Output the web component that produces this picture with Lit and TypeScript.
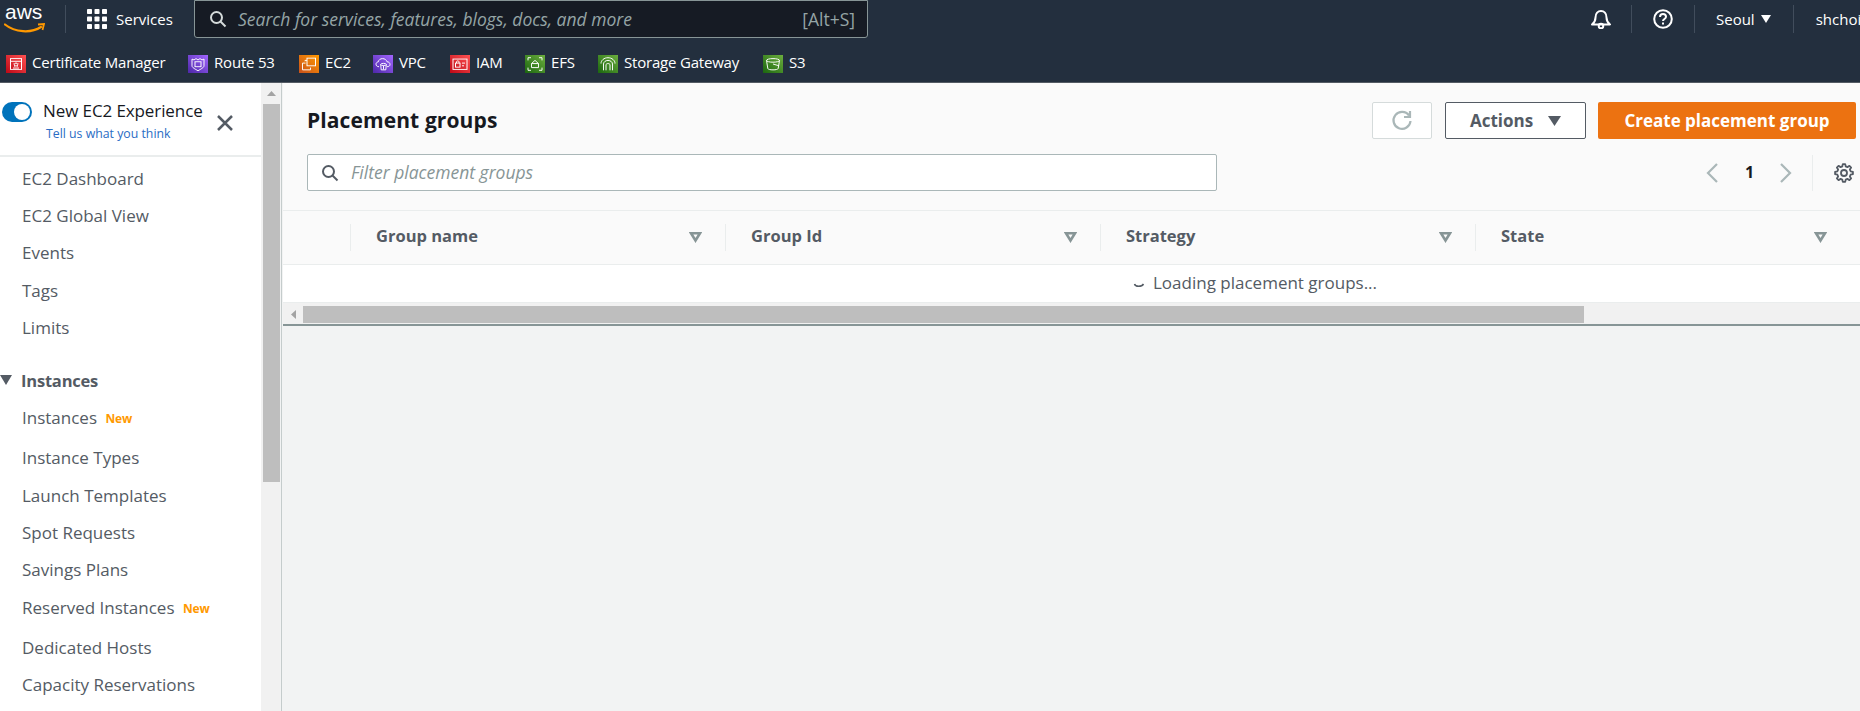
import { LitElement, html, css, svg } from "lit";
import { customElement } from "lit/decorators.js";

type Svc = { name: string; c1: string; c2: string; w: number; icon: any };
const s = svg;
const services: Svc[] = [
  { name: "Certificate Manager", c1: "#bd0816", c2: "#ff5252", w: 134, icon: s`<rect x="4.500" y="4" width="11" height="12"/><path d="M4.500 7h11M10 8.500l.8 1.300 1.500.2-1 1.100.2 1.500-1.500-.7-1.500.7.2-1.500-1-1.100 1.500-.2zM7 14.500h6"/>` },
  { name: "Route 53", c1: "#4d27a8", c2: "#a166ff", w: 63, icon: s`<path d="M4 4.500l2 1 2-1.500 2 1.500 2-1.500 2 1.500 2-1v7.500c0 2-3 3.500-6 5.500-3-2-6-3.500-6-5.500z"/><rect x="7" y="7.500" width="6" height="5.500"/>` },
  { name: "EC2", c1: "#c8511b", c2: "#ff9900", w: 26, icon: s`<rect x="8" y="3.500" width="8.500" height="8.500"/><path d="M8 6H6v1M3.500 9v7.500h8v-2.500M3.500 9h3"/>` },
  { name: "VPC", c1: "#4d27a8", c2: "#a166ff", w: 29, icon: s`<path d="M6 13c-2 0-3-1.300-3-2.800 0-1.400 1-2.400 2.200-2.500C5.500 5.500 7.500 4 9.500 4c2.300 0 4 1.500 4.500 3.500 1.800 0 3 1.300 3 3s-1.200 2.500-3 2.500"/><ellipse cx="10.500" cy="10.500" rx="2.800" ry="1.200"/><path d="M7.700 10.500l.5 6h4.600l.5-6M10.500 12v4"/>` },
  { name: "IAM", c1: "#bd0816", c2: "#ff5252", w: 27, icon: s`<rect x="3" y="4.500" width="14" height="11.500"/><rect x="5.500" y="9" width="4.500" height="4.500"/><path d="M6.500 9V7.500c0-1.300 2.500-1.300 2.500 0V9M12 9h3M12 12h2"/>` },
  { name: "EFS", c1: "#1b660f", c2: "#6cae3e", w: 25, icon: s`<path d="M6.500 9.500L10 6l3.500 3.500v4.500h-7zM6.500 9.500h7M3 6V3h3M14 3h3v3M3 14v3h3M14 17h3v-3"/>` },
  { name: "Storage Gateway", c1: "#1b660f", c2: "#6cae3e", w: 117, icon: s`<path d="M3 9.500c0-3.500 3-6.500 7-6.500s7 3 7 6.500M5.500 17v-7c0-2 2-4 4.500-4s4.500 2 4.500 4v7M8 17v-6c0-1 1-1.500 2-1.500s2 .5 2 1.500v6"/>` },
  { name: "S3", c1: "#1b660f", c2: "#6cae3e", w: 16, icon: s`<ellipse cx="10" cy="6" rx="6.500" ry="2"/><path d="M3.500 6l1.300 9c.2 1 2.500 1.500 5.200 1.500s5-.5 5.200-1.500l1.300-9M10 10l6 2"/>` },
];

const navTop = ["EC2 Dashboard", "EC2 Global View", "Events", "Tags", "Limits"];
const navInst: [string, boolean][] = [
  ["Instances", true], ["Instance Types", false], ["Launch Templates", false], ["Spot Requests", false],
  ["Savings Plans", false], ["Reserved Instances", true], ["Dedicated Hosts", false], ["Capacity Reservations", false],
];
const cols = ["Group name", "Group Id", "Strategy", "State"];

const gearPath = (() => {
  const n = 8, pts: string[] = [];
  for (let i = 0; i < n; i++) {
    const a = (i * 2 * Math.PI) / n;
    const step = (2 * Math.PI) / n;
    const p = (r: number, t: number) => `${(10 + r * Math.sin(t)).toFixed(2)} ${(10 - r * Math.cos(t)).toFixed(2)}`;
    pts.push(p(9, a - step * 0.17), p(9, a + step * 0.17), p(6.8, a + step * 0.33), p(6.8, a + step * 0.67));
  }
  return "M" + pts.join("L") + "z";
})();

@customElement("app-root")
export class AppRoot extends LitElement {
  static styles = css`
    :host { display: flex; flex-direction: column; width: 1860px; height: 711px; overflow: hidden;
      font-family: "Open Sans", "Noto Sans", sans-serif; font-size: 15px; color: #545b64; background: #f2f3f3; }
    svg { display: block; flex: none; }
    .top { height: 82px; flex: none; background: #232f3e; color: #fff; border-bottom: 1px solid #545b64; box-sizing: content-box; }
    .row1 { height: 38px; display: flex; align-items: center; }
    .logo { width: 50px; margin-left: 5px; align-self: flex-start; flex: none; }
    .logo span { display: block; font-family: "Liberation Sans", sans-serif; font-size: 21px; line-height: 24px; }
    .logo svg { margin: -1px 0 0 -1px; }
    .vline { width: 1px; height: 28px; background: #414d5c; flex: none; }
    .vl1 { margin: 0 21px 0 10px; }
    .svc { font-size: 15px; margin-left: 9px; width: 58px; white-space: nowrap; }
    .search { margin-left: 20px; width: 674px; height: 38px; align-self: flex-start; box-sizing: border-box; border: 1px solid #879596; border-radius: 0 0 3px 3px;
      background: #161b24; display: flex; align-items: center; padding: 0 12px 0 14px; }
    .search i { font-size: 17.500px; color: #95a5a6; margin-left: 11px; flex: 1; white-space: nowrap; }
    .search b { font-weight: 400; font-size: 17.500px; color: #95a5a6; }
    .right { margin-left: auto; display: flex; align-items: center; flex: none; width: 269px; }
    .v2 { margin: 0 21px 0 20px; }
    .v3 { margin: 0 21px 0 21px; }
    .reg { font-size: 15px; width: 40px; }
    .caret { margin-left: 6px; }
    .v4 { margin: 0 22px 0 22px; }
    .usr { font-size: 15px; white-space: nowrap; }
    .row2 { height: 27px; margin-top: 17px; display: flex; align-items: flex-start; padding-left: 6px; gap: 22px; }
    .it { display: flex; align-items: center; gap: 6px; height: 18px; font-size: 15px; white-space: nowrap; letter-spacing: -.2px; }
    .it span { margin-top: -4px; }
    .ic { width: 20px; height: 18px; flex: none; }
    .ic g { fill: none; stroke: #fff; stroke-width: 1; }
    .body { flex: 1; display: flex; min-height: 0; }
    nav { width: 261px; background: #fff; flex: none; }
    .exp { height: 72px; box-sizing: content-box; border-bottom: 2px solid #eaeded; display: flex; }
    .toggle { width: 30px; height: 20px; border-radius: 10px; background: #0073bb; margin: 19px 0 0 2px; position: relative; flex: none; }
    .toggle::after { content: ""; position: absolute; right: 2px; top: 2px; width: 16px; height: 16px; border-radius: 50%; background: #fff; }
    .exptext { margin: 17px 0 0 11px; }
    .exptext div { font-size: 17px; line-height: 22px; color: #16191f; white-space: nowrap; letter-spacing: -.1px; }
    .exptext a { display: block; font-size: 12.300px; line-height: 18px; color: #2a6cc4; margin: 3px 0 0 3px; white-space: nowrap; }
    .close { margin: 31px 0 0 13px; }
    .nav-list { padding-top: 2.500px; }
    .ni { height: 37.400px; display: flex; align-items: center; padding-left: 22px; font-size: 17px; white-space: nowrap; }
    .ni.has-new { height: 40px; padding-bottom: 3px; box-sizing: border-box; }
    .nh { height: 37.500px; margin-top: 15px; display: flex; align-items: center; font-weight: 700; font-size: 16.500px; letter-spacing: -.2px; }
    .nh svg { margin-right: 9px; }
    .new { color: #ff9900; font-size: 12px; font-weight: 700; margin-left: 8.500px; letter-spacing: -.2px; position: relative; top: 1px; }
    .vbar { width: 19px; flex: none; background: #f1f1f1; display: flex; flex-direction: column; align-items: flex-end; }
    .varrow { width: 17px; height: 21px; display: flex; align-items: center; justify-content: center; }
    .vthumb { width: 17px; height: 378px; background: #bebebe; }
    .split { width: 1px; margin-left: 1px; margin-right: 1px; background: #c5cccc; flex: none; }
    main { flex: 1; min-width: 0; display: flex; flex-direction: column; }
    .tools { height: 127px; flex: none; background: #fafafa; border-bottom: 1px solid #eaeded; box-sizing: content-box; padding: 0 4px 0 24px; }
    .t1 { display: flex; align-items: center; padding-top: 19px; height: 37px; }
    h1 { margin: -2px 0 0; font-size: 21px; font-weight: 700; color: #16191f; flex: 1; letter-spacing: .1px; }
    .btn { height: 37px; box-sizing: border-box; border-radius: 2px; display: flex; align-items: center; justify-content: center; font-weight: 700; font-size: 17px; padding-bottom: 1px; }
    .ref { width: 60px; border: 1px solid #d5dbdb; background: #fff; margin-right: 13px; padding-bottom: 0; }
    .act { width: 141px; border: 1px solid #545b64; background: #fff; margin-right: 12px; gap: 15px; }
    .act svg { margin-top: 2px; }
    .cre { width: 258px; background: #ec7211; color: #fff; }
    .t2 { display: flex; align-items: center; margin-top: 15px; }
    .filter { width: 910px; height: 37px; box-sizing: border-box; border: 1px solid #aab7b8; border-radius: 2px; background: #fff; display: flex; align-items: center; padding-left: 13px; gap: 12px; }
    .filter i { font-size: 17.500px; color: #879596; margin-top: -1px; }
    .pager { margin-left: auto; margin-right: 2px; display: flex; align-items: center; height: 37px; }
    .pn { font-weight: 700; color: #16191f; font-size: 16px; margin: -2px 27px 0 27px; width: 8px; text-align: center; }
    .pv { width: 1px; height: 36px; background: #eaeded; margin: 0 21px 0 20px; }
    .thead { height: 53px; flex: none; background: #fafafa; border-bottom: 1px solid #eaeded; box-sizing: content-box; display: flex; padding-left: 67px; align-items: center; }
    .col { width: 375px; height: 27px; border-left: 1px solid #eaeded; box-sizing: border-box; display: flex; align-items: center; padding-left: 25px; padding-bottom: 4px; font-weight: 700; font-size: 16.500px; }
    .col svg { margin-left: auto; margin-right: 23px; margin-top: 4px; }
    .trow { height: 38px; flex: none; background: #fff; display: flex; align-items: center; padding: 0 0 2px 850px; font-size: 17px; gap: 8px; box-sizing: border-box; border-bottom: 1px solid #eaeded; }
    .hbar { height: 21px; flex: none; background: #f1f1f1; display: flex; align-items: flex-end; box-sizing: border-box; padding-bottom: 1px; }
    .harrow { width: 20px; height: 17px; display: flex; align-items: center; justify-content: center; }
    .hthumb { width: 1281px; height: 17px; background: #bebebe; }
    .hline { height: 2px; flex: none; background: #879596; }
    .rest { flex: 1; background: #f2f3f3; }
  `;

  private chip(v: Svc, i: number) {
    const id = `g${i}`;
    return html`<div class="it">
      <svg class="ic" viewBox="0 0 20 20" preserveAspectRatio="none">
        <defs>${s`<linearGradient id=${id} x1="0" y1="1" x2="1" y2="0"><stop offset="0" stop-color=${v.c1}/><stop offset="1" stop-color=${v.c2}/></linearGradient>`}</defs>
        <rect width="20" height="20" fill="url(#${id})"/>
        <g>${v.icon}</g>
      </svg>
      <span style="width:${v.w}px">${v.name}</span>
    </div>`;
  }

  render() {
    return html`
      <header class="top">
        <div class="row1">
          <div class="logo"><span>aws</span>
            <svg width="41" height="11" viewBox="0 0 41 11"><path d="M1 1.500c10 8 26 9 36 2.500" fill="none" stroke="#f90" stroke-width="2.200" stroke-linecap="round"/><path d="M34 1.500l6-.5-1.500 6" fill="none" stroke="#f90" stroke-width="1.800"/></svg>
          </div>
          <div class="vline vl1"></div>
          <svg width="20" height="20" viewBox="0 0 20 20" fill="#fff">
            ${[0, 7.5, 15].map((y) => [0, 7.5, 15].map((x) => s`<rect x=${x} y=${y} width="5" height="5" rx=".8"/>`))}
          </svg>
          <div class="svc">Services</div>
          <div class="search">
            <svg width="18" height="18" viewBox="0 0 18 18" fill="none" stroke="#d5dbdb" stroke-width="2"><circle cx="7.500" cy="7.500" r="5.500"/><path d="M11.500 11.500l5 5"/></svg>
            <i>Search for services, features, blogs, docs, and more</i>
            <b>[Alt+S]</b>
          </div>
          <div class="right">
            <svg width="20" height="20" viewBox="0 0 20 20" fill="none" stroke="#fff" stroke-width="2"><path d="M1 15.500c2.500-2 3.500-3.500 3.500-7C4.500 4.500 7 2 10 2s5.500 2.500 5.500 6.500c0 3.500 1 5 3.500 7z" stroke-linejoin="round"/><circle cx="10" cy="17" r="2.300"/></svg>
            <div class="vline v2"></div>
            <svg width="20" height="20" viewBox="0 0 20 20" fill="none" stroke="#fff" stroke-width="2"><circle cx="10" cy="10" r="8.800"/><path d="M7 8c0-1.800 1.300-3 3-3s3 1.200 3 2.800c0 2.200-3 2.200-3 4.200"/><path d="M10 13.500v2"/></svg>
            <div class="vline v3"></div>
            <div class="reg">Seoul</div>
            <svg class="caret" width="10" height="8" viewBox="0 0 10 8" fill="#fff"><path d="M0 0h10L5 8z"/></svg>
            <div class="vline v4"></div>
            <div class="usr">shchoi</div>
          </div>
        </div>
        <div class="row2">${services.map((v, i) => this.chip(v, i))}</div>
      </header>
      <div class="body">
        <nav>
          <div class="exp">
            <div class="toggle"></div>
            <div class="exptext"><div>New EC2 Experience</div><a>Tell us what you think</a></div>
            <svg class="close" width="18" height="18" viewBox="0 0 18 18" fill="none" stroke="#545b64" stroke-width="2.500"><path d="M2 2l14 14M16 2L2 16"/></svg>
          </div>
          <div class="nav-list">
            ${navTop.map((n) => html`<div class="ni">${n}</div>`)}
            <div class="nh"><svg width="12" height="10" viewBox="0 0 12 10" fill="#545b64"><path d="M0 0h12L6 10z"/></svg>Instances</div>
            ${navInst.map(([n, isNew]) => html`<div class="ni ${isNew ? "has-new" : ""}">${n}${isNew ? html`<span class="new">New</span>` : ""}</div>`)}
          </div>
        </nav>
        <div class="vbar">
          <div class="varrow"><svg width="9" height="5" viewBox="0 0 9 5" fill="#a3a3a3"><path d="M0 5h9L4.500 0z"/></svg></div>
          <div class="vthumb"></div>
        </div>
        <div class="split"></div>
        <main>
          <div class="tools">
            <div class="t1">
              <h1>Placement groups</h1>
              <div class="btn ref"><svg width="22" height="22" viewBox="0 0 22 22" fill="none" stroke="#aab7b8" stroke-width="2.200"><path d="M18 5.500A8.500 8.500 0 1 0 19.500 11"/><path d="M19 1v6h-6"/></svg></div>
              <div class="btn act">Actions <svg width="13" height="10" viewBox="0 0 13 10" fill="#545b64"><path d="M0 0h13L6.500 10z"/></svg></div>
              <div class="btn cre">Create placement group</div>
            </div>
            <div class="t2">
              <div class="filter">
                <svg width="18" height="18" viewBox="0 0 18 18" fill="none" stroke="#545b64" stroke-width="2"><circle cx="7.500" cy="7.500" r="5.500"/><path d="M11.500 11.500l5 5"/></svg>
                <i>Filter placement groups</i>
              </div>
              <div class="pager">
                <svg width="12" height="20" viewBox="0 0 12 20" fill="none" stroke="#aab7b8" stroke-width="2.200"><path d="M11 1L2 10l9 9"/></svg>
                <span class="pn">1</span>
                <svg width="12" height="20" viewBox="0 0 12 20" fill="none" stroke="#aab7b8" stroke-width="2.200"><path d="M1 1l9 9-9 9"/></svg>
                <div class="pv"></div>
                <svg width="20" height="20" viewBox="0 0 20 20" fill="none" stroke="#545b64" stroke-width="1.800"><circle cx="10" cy="10" r="3"/><path d=${gearPath} stroke-linejoin="round"/></svg>
              </div>
            </div>
          </div>
          <div class="thead">
            ${cols.map((c) => html`<div class="col">${c}<svg width="13" height="11" viewBox="0 0 13 11" fill="none" stroke="#879596" stroke-width="2.600"><path d="M2 1.300h9L6.500 8.500z"/></svg></div>`)}
          </div>
          <div class="trow">
            <svg width="12" height="12" viewBox="0 0 12 12" fill="none" stroke="#545b64" stroke-width="1.500"><path d="M1.500 7c.8 3 7.200 3 9 0"/></svg>
            <span>Loading placement groups...</span>
          </div>
          <div class="hbar">
            <div class="harrow"><svg width="5" height="9" viewBox="0 0 5 9" fill="#a3a3a3"><path d="M5 0v9L0 4.500z"/></svg></div>
            <div class="hthumb"></div>
          </div>
          <div class="hline"></div>
          <div class="rest"></div>
        </main>
      </div>
    `;
  }
}
